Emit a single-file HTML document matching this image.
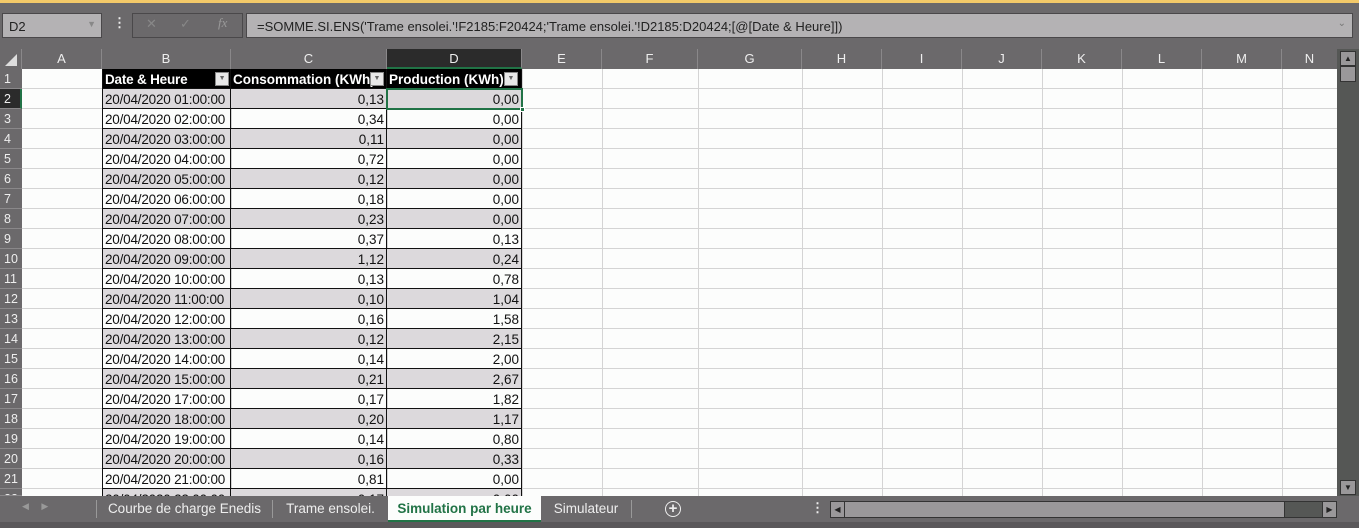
<!DOCTYPE html>
<html><head><meta charset="utf-8"><style>
*{margin:0;padding:0;box-sizing:border-box}
body{width:1359px;height:528px;overflow:hidden;background:#6b696b;font-family:"Liberation Sans",sans-serif;font-size:13px;position:relative}
.a{position:absolute}
.top{left:0;top:0;width:1359px;height:3px;background:#f3c969}
.nb{left:2px;top:13px;width:100px;height:25px;background:#b4b2b4;border:1px solid #4a484a;color:#222;padding:5px 6px;font-size:13px}
.fb{left:246px;top:13px;width:1107px;height:25px;background:#b4b2b4;border:1px solid #4a484a;color:#222;padding:5px 10px;font-size:13px}
.grid{left:22px;top:69px;width:1315px;height:427px;background:#fcfdfc;overflow:hidden}
.ch{top:49px;height:20px;color:#eee;text-align:center;line-height:20px;font-size:13px;border-right:1px solid #8a888a}
.rh{left:0;width:22px;height:20px;color:#eee;font-size:12.5px;line-height:21px;padding-left:4px;border-bottom:1px solid #8a888a}
.vl{top:0;width:1px;height:427px;background:#d4d4d4}
.hl{left:0;width:1315px;height:1px;background:#d4d4d4}
.r{position:absolute;left:80px;width:420px;height:20px;line-height:21px;color:#111;font-size:13.5px}
.r div{position:absolute;top:0;height:20px;border-right:1px solid #111;border-bottom:1px solid #111;white-space:nowrap;overflow:hidden}
.r .b{left:0;width:129px;padding-left:2px;border-left:1px solid #111;letter-spacing:-0.2px}
.r .c{left:129px;width:156px;text-align:right;padding-right:2px}
.r .d{left:285px;width:135px;text-align:right;padding-right:2px}
.g div{background:#dcd9dc}
.hd div{background:#000;color:#fff;font-weight:bold}
.dd{display:inline-block;width:14px;height:14px;background:#e8e8e8;border:1px solid #888;position:absolute;top:3px;color:#666;font-size:7px;line-height:12px;text-align:center;font-weight:normal}
.tab{top:496px;height:26px;line-height:26px;color:#eee;font-size:13.5px;text-align:center}
</style></head><body>
<div class="a top"></div>
<div class="a nb">D2<span style="position:absolute;right:5px;top:5px;color:#888;font-size:9px">▼</span></div>
<div class="a" style="left:113px;top:15px;color:#eee;font-weight:bold">⋮</div>
<div class="a" style="left:132px;top:13px;width:111px;height:25px;border:1px solid #4a484a;background:#6b696b"></div>
<div class="a" style="left:146px;top:16px;color:#888">✕</div>
<div class="a" style="left:180px;top:16px;color:#888">✓</div>
<div class="a" style="left:218px;top:15px;color:#999;font-style:italic;font-family:'Liberation Serif',serif">fx</div>
<div class="a fb">=SOMME.SI.ENS('Trame ensolei.'!F2185:F20424;'Trame ensolei.'!D2185:D20424;[@[Date &amp; Heure]])<span style="position:absolute;right:6px;top:4px;color:#777;font-size:10px">⌄</span></div>

<div class="a" style="left:0;top:49px;width:22px;height:20px;border-right:1px solid #8a888a"><div style="position:absolute;right:4px;bottom:3px;width:0;height:0;border-left:12px solid transparent;border-bottom:12px solid #ddd"></div></div>
<div class="a ch" style="left:22px;width:80px">A</div>
<div class="a ch" style="left:102px;width:129px">B</div>
<div class="a ch" style="left:231px;width:156px">C</div>
<div class="a ch" style="left:387px;width:135px;background:#2b2b2b;border-bottom:2px solid #217346">D</div>
<div class="a ch" style="left:522px;width:80px">E</div>
<div class="a ch" style="left:602px;width:96px">F</div>
<div class="a ch" style="left:698px;width:104px">G</div>
<div class="a ch" style="left:802px;width:80px">H</div>
<div class="a ch" style="left:882px;width:80px">I</div>
<div class="a ch" style="left:962px;width:80px">J</div>
<div class="a ch" style="left:1042px;width:80px">K</div>
<div class="a ch" style="left:1122px;width:80px">L</div>
<div class="a ch" style="left:1202px;width:80px">M</div>
<div class="a ch" style="left:1282px;width:55px;border-right:none">N</div>

<div class="a grid">
<div class="a vl" style="left:80px"></div><div class="a vl" style="left:209px"></div><div class="a vl" style="left:365px"></div><div class="a vl" style="left:500px"></div><div class="a vl" style="left:580px"></div><div class="a vl" style="left:676px"></div><div class="a vl" style="left:780px"></div><div class="a vl" style="left:860px"></div><div class="a vl" style="left:940px"></div><div class="a vl" style="left:1020px"></div><div class="a vl" style="left:1100px"></div><div class="a vl" style="left:1180px"></div><div class="a vl" style="left:1260px"></div>
<div class="a hl" style="top:19px"></div><div class="a hl" style="top:39px"></div><div class="a hl" style="top:59px"></div><div class="a hl" style="top:79px"></div><div class="a hl" style="top:99px"></div><div class="a hl" style="top:119px"></div><div class="a hl" style="top:139px"></div><div class="a hl" style="top:159px"></div><div class="a hl" style="top:179px"></div><div class="a hl" style="top:199px"></div><div class="a hl" style="top:219px"></div><div class="a hl" style="top:239px"></div><div class="a hl" style="top:259px"></div><div class="a hl" style="top:279px"></div><div class="a hl" style="top:299px"></div><div class="a hl" style="top:319px"></div><div class="a hl" style="top:339px"></div><div class="a hl" style="top:359px"></div><div class="a hl" style="top:379px"></div><div class="a hl" style="top:399px"></div><div class="a hl" style="top:419px"></div>
<div class="r hd" style="top:0"><div class="b">Date &amp; Heure<span class="dd" style="left:112px">▼</span></div><div class="c" style="text-align:left;padding-left:2px;overflow:visible">Consommation (KWh)<span class="dd" style="left:139px">▼</span></div><div class="d" style="text-align:left;padding-left:2px">Production (KWh)<span class="dd" style="left:117px">▼</span></div></div>
<div class="r g" style="top:20px"><div class="b">20/04/2020 01:00:00</div><div class="c">0,13</div><div class="d">0,00</div></div>
<div class="r" style="top:40px"><div class="b">20/04/2020 02:00:00</div><div class="c">0,34</div><div class="d">0,00</div></div>
<div class="r g" style="top:60px"><div class="b">20/04/2020 03:00:00</div><div class="c">0,11</div><div class="d">0,00</div></div>
<div class="r" style="top:80px"><div class="b">20/04/2020 04:00:00</div><div class="c">0,72</div><div class="d">0,00</div></div>
<div class="r g" style="top:100px"><div class="b">20/04/2020 05:00:00</div><div class="c">0,12</div><div class="d">0,00</div></div>
<div class="r" style="top:120px"><div class="b">20/04/2020 06:00:00</div><div class="c">0,18</div><div class="d">0,00</div></div>
<div class="r g" style="top:140px"><div class="b">20/04/2020 07:00:00</div><div class="c">0,23</div><div class="d">0,00</div></div>
<div class="r" style="top:160px"><div class="b">20/04/2020 08:00:00</div><div class="c">0,37</div><div class="d">0,13</div></div>
<div class="r g" style="top:180px"><div class="b">20/04/2020 09:00:00</div><div class="c">1,12</div><div class="d">0,24</div></div>
<div class="r" style="top:200px"><div class="b">20/04/2020 10:00:00</div><div class="c">0,13</div><div class="d">0,78</div></div>
<div class="r g" style="top:220px"><div class="b">20/04/2020 11:00:00</div><div class="c">0,10</div><div class="d">1,04</div></div>
<div class="r" style="top:240px"><div class="b">20/04/2020 12:00:00</div><div class="c">0,16</div><div class="d">1,58</div></div>
<div class="r g" style="top:260px"><div class="b">20/04/2020 13:00:00</div><div class="c">0,12</div><div class="d">2,15</div></div>
<div class="r" style="top:280px"><div class="b">20/04/2020 14:00:00</div><div class="c">0,14</div><div class="d">2,00</div></div>
<div class="r g" style="top:300px"><div class="b">20/04/2020 15:00:00</div><div class="c">0,21</div><div class="d">2,67</div></div>
<div class="r" style="top:320px"><div class="b">20/04/2020 17:00:00</div><div class="c">0,17</div><div class="d">1,82</div></div>
<div class="r g" style="top:340px"><div class="b">20/04/2020 18:00:00</div><div class="c">0,20</div><div class="d">1,17</div></div>
<div class="r" style="top:360px"><div class="b">20/04/2020 19:00:00</div><div class="c">0,14</div><div class="d">0,80</div></div>
<div class="r g" style="top:380px"><div class="b">20/04/2020 20:00:00</div><div class="c">0,16</div><div class="d">0,33</div></div>
<div class="r" style="top:400px"><div class="b">20/04/2020 21:00:00</div><div class="c">0,81</div><div class="d">0,00</div></div>
<div class="r g" style="top:420px"><div class="b">20/04/2020 22:00:00</div><div class="c">0,17</div><div class="d">0,00</div></div>
<div class="a" style="left:364px;top:19px;width:137px;height:22px;border:2px solid #217346"></div>
<div class="a" style="left:498px;top:38px;width:5px;height:5px;background:#217346;border:1px solid #fff"></div>
</div>

<div class="a rh" style="top:69px">1</div>
<div class="a rh" style="top:89px;background:#2b2b2b;border-right:2px solid #217346">2</div>
<div class="a rh" style="top:109px">3</div><div class="a rh" style="top:129px">4</div><div class="a rh" style="top:149px">5</div><div class="a rh" style="top:169px">6</div><div class="a rh" style="top:189px">7</div><div class="a rh" style="top:209px">8</div><div class="a rh" style="top:229px">9</div><div class="a rh" style="top:249px">10</div><div class="a rh" style="top:269px">11</div><div class="a rh" style="top:289px">12</div><div class="a rh" style="top:309px">13</div><div class="a rh" style="top:329px">14</div><div class="a rh" style="top:349px">15</div><div class="a rh" style="top:369px">16</div><div class="a rh" style="top:389px">17</div><div class="a rh" style="top:409px">18</div><div class="a rh" style="top:429px">19</div><div class="a rh" style="top:449px">20</div><div class="a rh" style="top:469px">21</div><div class="a rh" style="top:489px;height:7px;overflow:hidden">22</div>

<div class="a" style="left:1337px;top:49px;width:22px;height:447px;background:#555755"></div>
<div class="a" style="left:1340px;top:51px;width:16px;height:15px;background:#9a989a;border:1px solid #333;color:#222;font-size:8px;text-align:center;line-height:13px">▲</div>
<div class="a" style="left:1340px;top:66px;width:16px;height:16px;background:#9a989a;border:1px solid #333"></div>
<div class="a" style="left:1340px;top:480px;width:16px;height:15px;background:#9a989a;border:1px solid #333;color:#222;font-size:8px;text-align:center;line-height:13px">▼</div>

<div class="a" style="left:0;top:496px;width:1359px;height:26px;background:#6b696b"></div>
<div class="a" style="left:22px;top:501px;color:#999;font-size:9px">◀&nbsp;&nbsp;&nbsp;&nbsp;&nbsp;▶</div>
<div class="a" style="left:96px;top:500px;width:1px;height:18px;background:#999"></div>
<div class="a tab" style="left:97px;width:175px">Courbe de charge Enedis</div>
<div class="a" style="left:272px;top:500px;width:1px;height:18px;background:#999"></div>
<div class="a tab" style="left:273px;width:115px">Trame ensolei.</div>
<div class="a tab" style="left:388px;width:153px;background:#fcfdfc;color:#217346;font-weight:bold;border-bottom:2px solid #217346">Simulation par heure</div>
<div class="a tab" style="left:541px;width:90px">Simulateur</div>
<div class="a" style="left:631px;top:500px;width:1px;height:18px;background:#999"></div>
<div class="a" style="left:665px;top:501px;width:16px;height:16px;border:1.5px solid #eee;border-radius:50%;color:#eee;text-align:center;line-height:13px;font-size:15px;font-weight:bold">+</div>
<div class="a" style="left:811px;top:500px;color:#eee;font-weight:bold">⋮</div>
<div class="a" style="left:830px;top:501px;width:507px;height:17px;background:#555755;border:1px solid #333"></div>
<div class="a" style="left:831px;top:502px;width:14px;height:15px;background:#9a989a;border-right:1px solid #333;color:#222;font-size:8px;line-height:15px;text-align:center">◀</div>
<div class="a" style="left:845px;top:502px;width:440px;height:15px;background:#9a989a;border-right:1px solid #333"></div>
<div class="a" style="left:1322px;top:502px;width:14px;height:15px;background:#9a989a;border-left:1px solid #333;color:#222;font-size:8px;line-height:15px;text-align:center">▶</div>
<div class="a" style="left:0;top:522px;width:1359px;height:6px;background:#5a585a"></div>
</body></html>
